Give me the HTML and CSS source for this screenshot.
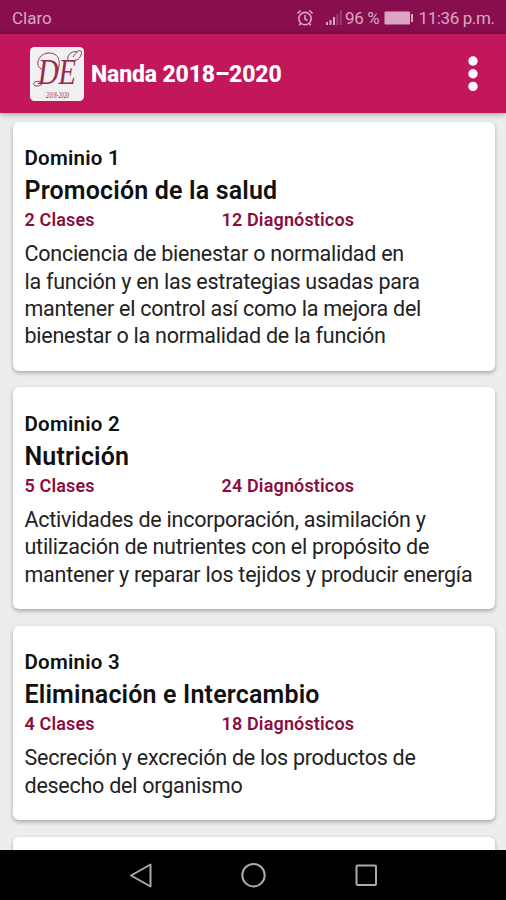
FILE: index.html
```html
<!DOCTYPE html>
<html lang="es">
<head>
    <meta charset="UTF-8">
    <meta name="viewport" content="width=device-width, initial-scale=1.0">
    <title>Nanda 2018–2020</title>
    <link rel="stylesheet" href="styles.css">
</head>
<body>
    <div class="status-bar">
        <span class="carrier">Claro</span>
        <svg class="alarm" width="18" height="18" viewBox="0 0 18 18">
            <circle cx="9" cy="9.6" r="6.2"/>
            <path d="M9 6v4l2.5 1.6M1.4 4.4l3.4-2.9M16.6 4.4l-3.4-2.9M4.8 14.2l-1.5 2M13.2 14.2l1.5 2"/>
        </svg>
        <svg class="signal" width="18" height="16" viewBox="0 0 18 16">
            <path d="M1 12h2v3H1zM4.5 10h2v5h-2zM8 7h2v8H8z"/>
            <path d="M11.3 4h2v11h-2zM14.8 0h2v15h-2z" opacity=".3"/>
        </svg>
        <span class="percent">96 %</span>
        <svg class="battery" width="30" height="14" viewBox="0 0 30 14">
            <rect x=".5" y=".5" width="25.5" height="13" rx="1"/>
            <rect x="27" y="3" width="2" height="8"/>
        </svg>
        <span class="time">11:36 p.m.</span>
    </div>

    <header class="app-bar">
        <svg class="logo" width="56" height="56" viewBox="0 0 56 56">
            <rect x="1" y="1" width="54" height="54" rx="4.5"/>
            <text class="initials" x="9" y="38" textLength="38" lengthAdjust="spacingAndGlyphs">DE</text>
            <path d="M13 23C5 21 9 7 20 7c13 0 12 14 6 24M14 36c-7-2-11 1-9 3s7 1 9-2M40 16c-4-5 2-12 8-10M46 14c4 1 8-7 6-9s-6 3-8 6"/>
            <text class="years" x="17" y="52" textLength="23" lengthAdjust="spacingAndGlyphs">2018-2020</text>
        </svg>
        <h1>Nanda 2018–2020</h1>
        <svg class="menu" width="10" height="36" viewBox="0 0 10 36">
            <circle cx="5" cy="5" r="4.7"/>
            <circle cx="5" cy="17.7" r="4.7"/>
            <circle cx="5" cy="30.4" r="4.7"/>
        </svg>
    </header>

    <main class="list">
        <article class="card">
            <p class="domain">Dominio 1</p>
            <h2>Promoción de la salud</h2>
            <div class="counts">
                <span>2 Clases</span>
                <span>12 Diagnósticos</span>
            </div>
            <p class="description">Conciencia de bienestar o normalidad en<br>la función y en las estrategias usadas para<br>mantener el control así como la mejora del<br>bienestar o la normalidad de la función</p>
        </article>
        <article class="card">
            <p class="domain">Dominio 2</p>
            <h2>Nutrición</h2>
            <div class="counts">
                <span>5 Clases</span>
                <span>24 Diagnósticos</span>
            </div>
            <p class="description">Actividades de incorporación, asimilación y<br>utilización de nutrientes con el propósito de<br>mantener y reparar los tejidos y producir energía</p>
        </article>
        <article class="card">
            <p class="domain">Dominio 3</p>
            <h2>Eliminación e Intercambio</h2>
            <div class="counts">
                <span>4 Clases</span>
                <span>18 Diagnósticos</span>
            </div>
            <p class="description">Secreción y excreción de los productos de<br>desecho del organismo</p>
        </article>
        <article class="card"></article>
    </main>

    <nav class="nav-bar">
        <svg width="24" height="26" viewBox="0 0 24 26">
            <path d="M22.5 2.5v22L3 13.5z"/>
        </svg>
        <svg width="26" height="26" viewBox="0 0 26 26">
            <circle cx="13.5" cy="13.2" r="11.2"/>
        </svg>
        <svg width="24" height="26" viewBox="0 0 24 26">
            <rect x="2.5" y="3.5" width="19.5" height="19.5" rx="1"/>
        </svg>
    </nav>
</body>
</html>
```

FILE: styles.css
```css
* {
    box-sizing: border-box;
}

body {
    margin: 0;
    height: 900px;
    display: flex;
    flex-direction: column;
    overflow: hidden;
    font-family: Roboto, sans-serif;
    background-color: #ededed;
}

h1, h2, p {
    margin: 0;
}

/* Status bar */
.status-bar {
    flex: none;
    height: 34px;
    display: flex;
    align-items: center;
    padding: 2px 11.5px 0 12px;
    background-color: #880e4f;
    color: #dba6c3;
    font-size: 17px;
    white-space: nowrap;
}

.carrier {
    flex: 1;
}

.alarm {
    fill: none;
    stroke: #dba6c3;
    stroke-width: 1.6;
    margin-right: 11px;
}

.signal,
.battery {
    fill: #dba6c3;
}

.percent {
    margin: 0 4px 0 2px;
    letter-spacing: -0.3px;
}

.time {
    margin-left: 5px;
    letter-spacing: -0.4px;
}

/* App bar */
.app-bar {
    flex: none;
    height: 79px;
    display: flex;
    align-items: center;
    padding: 0 28px 0 29px;
    background-color: #c2185b;
    color: #fff;
    box-shadow: 0 1px 6px rgba(0, 0, 0, 0.35);
    z-index: 1;
}

.logo rect {
    fill: #f1f0f0;
}

.logo path {
    fill: none;
    stroke: #96395b;
    stroke-width: 1;
}

.initials {
    font: italic 36px "Liberation Serif", serif;
    fill: #96294f;
}

.years {
    font: italic 8px "Liberation Serif", serif;
    fill: #96294f;
}

.app-bar h1 {
    flex: 1;
    margin: 2px 0 0 6px;
    font-size: 23px;
    font-weight: 800;
    letter-spacing: -0.15px;
}

.menu {
    fill: #fff;
}

/* Cards */
.list {
    flex: 1;
    min-height: 0;
    overflow: hidden;
    padding: 8.7px 11.5px 0 12.5px;
}

.card {
    min-height: 60px;
    margin-bottom: 16.8px;
    padding: 23.2px 12px 21px;
    background-color: #fff;
    border-radius: 6px;
    box-shadow: 0 2px 4px rgba(0, 0, 0, 0.3);
}

.domain {
    font-size: 20.5px;
    font-weight: 600;
    line-height: 26px;
    letter-spacing: 0.25px;
    color: #111;
}

.card h2 {
    font-size: 25px;
    font-weight: 600;
    line-height: 39px;
    letter-spacing: 0.17px;
    color: #111;
}

.counts {
    display: grid;
    grid-template-columns: 197px 1fr;
    font-size: 18px;
    font-weight: 600;
    line-height: 20px;
    letter-spacing: 0.15px;
    color: #880e3f;
}

.description {
    margin-top: 10.5px;
    font-size: 21.5px;
    line-height: 27.3px;
    letter-spacing: -0.25px;
    color: #222;
    white-space: nowrap;
}

/* Navigation bar */
.nav-bar {
    flex: none;
    height: 50px;
    display: flex;
    justify-content: center;
    align-items: center;
    gap: 88px;
    background-color: #000;
}

.nav-bar svg {
    fill: none;
    stroke: #aaa;
    stroke-width: 2;
    stroke-linejoin: round;
}
```
